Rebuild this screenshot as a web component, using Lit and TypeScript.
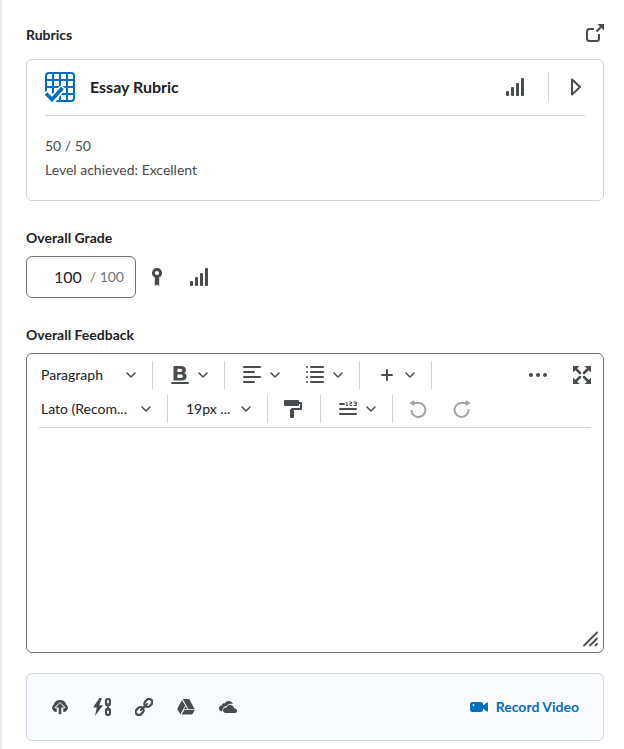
import { LitElement, html, css, svg, nothing } from "lit";
import { customElement, property } from "lit/decorators.js";

const glyphs: Record<string, unknown> = {
  open: svg`
    <path d="M8 5H3.500Q1 5 1 7.500V14.500Q1 17 3.500 17H10.500Q13 17 13 14.500V10" fill="none" stroke="currentColor" stroke-width="2"/>
    <path d="M10.500 7.500 15 3" fill="none" stroke="currentColor" stroke-width="2.200"/>
    <path d="M11.500 0H18V6.500Z"/>`,
  bars: svg`
    <rect x="0" y="13" width="3" height="5" rx="1"/>
    <rect x="5" y="9" width="3" height="9" rx="1"/>
    <rect x="10" y="5" width="3" height="13" rx="1"/>
    <rect x="15" y="0" width="3" height="18" rx="1"/>`,
  play: svg`<path d="M5 1.400V16.600L13 9Z" fill="none" stroke="currentColor" stroke-width="2" stroke-linejoin="round"/>`,
  award: svg`
    <circle cx="9" cy="5" r="3.600" fill="none" stroke="currentColor" stroke-width="3"/>
    <path d="M6.800 9H11.200V18L9 16.600 6.800 18Z"/>`,
  bold: svg`
    <path fill-rule="evenodd" d="M2.500 0H9.500C13.300 0 15 1.400 15 4C15 5.500 14.300 6.500 13 7.100C14.700 7.600 15.600 8.900 15.600 10.500C15.600 13.400 13.400 14.600 10 14.600H2.500ZM6.400 2.700V6H9C10.700 6 11.300 5.400 11.300 4.300C11.300 3.200 10.700 2.700 9 2.700ZM6.400 8.500V11.900H9.400C11.200 11.900 11.800 11.400 11.800 10.200C11.800 9 11.200 8.500 9.400 8.500Z"/>
    <rect x="0" y="16" width="18" height="2" rx="1"/>`,
  align: svg`
    <rect x="0" y="0" width="18" height="2" rx="1"/><rect x="0" y="5" width="12" height="2" rx="1"/>
    <rect x="0" y="10" width="18" height="2" rx="1"/><rect x="0" y="15" width="12" height="2" rx="1"/>`,
  list: svg`
    <rect x="0" y="0" width="2" height="2" rx="1"/><rect x="4" y="0" width="14" height="2" rx="1"/>
    <rect x="0" y="5" width="2" height="2" rx="1"/><rect x="4" y="5" width="14" height="2" rx="1"/>
    <rect x="0" y="10" width="2" height="2" rx="1"/><rect x="4" y="10" width="14" height="2" rx="1"/>
    <rect x="0" y="15" width="2" height="2" rx="1"/><rect x="4" y="15" width="14" height="2" rx="1"/>`,
  plus: svg`<path d="M9 4V14M4 9H14" fill="none" stroke="currentColor" stroke-width="2" stroke-linecap="round"/>`,
  dots: svg`<circle cx="2" cy="9" r="2"/><circle cx="9" cy="9" r="2"/><circle cx="16" cy="9" r="2"/>`,
  expand: svg`
    <path d="M3 3 7 7M15 3 11 7M3 15 7 11M15 15 11 11" fill="none" stroke="currentColor" stroke-width="2.500" stroke-linecap="round"/>
    <path d="M0 0H6.500L0 6.500ZM18 0V6.500L11.500 0ZM0 18V11.500L6.500 18ZM18 18H11.500L18 11.500Z"/>`,
  roller: svg`
    <rect x="0" y="0" width="15" height="6" rx="1"/>
    <path d="M15 3H17V9H8V11" fill="none" stroke="currentColor" stroke-width="2" stroke-linejoin="round"/>
    <rect x="6" y="9" width="4" height="9" rx="1"/>`,
  count: svg`
    <rect x="0" y="3" width="6" height="2" rx="1"/>
    <rect x="0" y="8" width="18" height="2" rx="1"/><rect x="0" y="13" width="18" height="2" rx="1"/>
    <path d="M7 2.500H8V5.500M7 5.500H9M10.500 2H12.500V3.500H11V5.500H13M14.500 2H17.300V5.500H14.500M15.500 3.700H17" fill="none" stroke="currentColor" stroke-width="1"/>`,
  undo: svg`
    <path d="M3.500 3H10A7 7 0 1 1 2.500 11" fill="none" stroke="currentColor" stroke-width="2" stroke-linecap="round"/>
    <path d="M0 3 5.500 0V6Z"/>`,
  redo: svg`
    <path d="M14.500 3H8A7 7 0 1 0 15.500 10" fill="none" stroke="currentColor" stroke-width="2" stroke-linecap="round"/>
    <path d="M18 3 12.500 0V6Z"/>`,
  upload: svg`
    <path d="M4.500 14A4.300 4.300 0 0 1 3 6.200A6.200 5.500 0 0 1 15 6.200A4.300 4.300 0 0 1 13.500 14Z"/>
    <path d="M9 5 13.500 9.500H11.500V15H6.500V9.500H4.500Z" fill="#f9fbff" stroke="#f9fbff" stroke-width="1.500" stroke-linejoin="round"/>
    <path d="M9 5.200 12.600 9.200H10V16H8V9.200H5.400Z" stroke="currentColor" stroke-width="0.600" stroke-linejoin="round"/>`,
  quick: svg`
    <path d="M6.500 0 0 9.500H3.800L2 18 10 7.200H6.200L9 0Z"/>
    <rect x="13" y="1" width="4" height="6.500" rx="2" fill="none" stroke="currentColor" stroke-width="2.200"/>
    <rect x="13" y="10.500" width="4" height="6.500" rx="2" fill="none" stroke="currentColor" stroke-width="2.200"/>
    <path d="M15 5V13" stroke="currentColor" stroke-width="1.500"/>`,
  link: svg`
    <g fill="none" stroke="currentColor" stroke-width="2.200">
      <rect x="9" y="1.700" width="8.600" height="6.400" rx="3.200" transform="rotate(-45 13.300 4.900)"/>
      <rect x="0.400" y="9.900" width="8.600" height="6.400" rx="3.200" transform="rotate(-45 4.700 13.100)"/>
      <path d="M6 12 12 6" stroke-linecap="round"/>
    </g>`,
  drive: svg`
    <path d="M5.800 1H12.200L17.800 11.200H11.400ZM5 2 8.300 7.600 3.400 16.300 0.200 11ZM7.300 12H17.800L15.200 16.500H4.600Z"/>
    <path d="M8.700 8.300 10.500 11.200H7Z"/>`,
  cloud: svg`
    <path d="M2.500 13.500C0.500 13 0 11.600 0 10.500C0 8.800 1.200 7.800 2.600 7.600C3 5.500 4.800 5 6 5.200C7 3.300 9 2.600 11 3.200C12.700 3.700 13.700 5 14 6.300C10.800 5 8.600 6.400 7.800 8C5.500 8 3.500 10 3.500 12Z"/>
    <path d="M7 15C5 15 4 13.900 4 12.300C4 10.500 5.500 9.300 7.500 9.500C8.500 7.200 10.200 6.500 12 6.900C13.600 7.200 14.800 8.600 15 10.200C17 10.200 18 11.300 18 12.700C18 14.100 17 15 15.600 15Z"/>`,
  video: svg`
    <path fill-rule="evenodd" d="M2.500 4H10.500Q13 4 13 6.500V7.500L17 4.500Q18 4 18 5V13Q18 14 17 13.500L13 10.500V11.500Q13 14 10.500 14H2.500Q0 14 0 11.500V6.500Q0 4 2.500 4ZM3.500 6A1 1 0 1 0 3.500 8A1 1 0 1 0 3.500 6Z"/>`,
  grip: svg`<path d="M3 15.500 16 2.500M9 15.500 16 8.500M14.500 15.500 16 14" fill="none" stroke="currentColor" stroke-width="1.800" stroke-linecap="round"/>`,
};

const icon = (name: string) =>
  html`<svg class="icon" viewBox="0 0 18 18" width="18" height="18" fill="currentColor" aria-hidden="true">${glyphs[name]}</svg>`;

const chevron = html`<svg class="chevron" viewBox="0 0 10 6" width="10" height="6" aria-hidden="true">
  <path d="M1 1 5 5 9 1" fill="none" stroke="currentColor" stroke-width="1.500" stroke-linecap="round" stroke-linejoin="round"/>
</svg>`;

const rubricIcon = html`<svg class="rubric-icon" viewBox="0 0 30 30" width="30" height="30" aria-hidden="true">
  <rect x="1" y="1" width="28" height="28" rx="3" fill="none" stroke="currentColor" stroke-width="2"/>
  <path d="M8 1V29M15 1V29M22 1V29M1 8H29M1 15H29M1 22H29" stroke="currentColor" stroke-width="2"/>
  <path d="M-1 20V31H10L20 16 16 13 8 22 3 19Z" fill="#fff"/>
  <path d="M1 22.500 7 28 17 16.500" fill="none" stroke="#fff" stroke-width="7"/>
  <path d="M1 21.500 7 27.500 17.500 16" fill="none" stroke="currentColor" stroke-width="3.600"/>
</svg>`;

const shared = css`
  * { box-sizing: border-box; }
  .icon, .chevron { display: block; flex: none; }
  button {
    display: flex;
    align-items: center;
    gap: 9px;
    margin: 0;
    padding: 0;
    border: 0;
    background: none;
    color: #494c4e;
    font: inherit;
    cursor: pointer;
  }
  button:disabled { color: #a4a5a6; cursor: default; }
`;

@customElement("rubric-card")
class RubricCard extends LitElement {
  @property() name = "";
  @property() score = "";
  @property() level = "";

  static styles = [shared, css`
    :host {
      display: block;
      padding: 0 18px;
      border: 1px solid #cdd5dc;
      border-radius: 6px;
    }
    .head {
      display: flex;
      align-items: center;
      height: 56px;
      padding-bottom: 1px;
      border-bottom: 1px solid #cdd5dc;
    }
    .rubric-icon { flex: none; color: #006fbf; }
    .name {
      flex: 1;
      margin: 0 0 0 15px;
      font-size: 16px;
      line-height: 24px;
      font-weight: 700;
      color: #202122;
    }
    .divider {
      width: 1px;
      height: 30px;
      margin: 0 18px 0 24px;
      background: #cdd5dc;
    }
    .body { padding: 18px 0; color: #494c4e; }
    .body p { margin: 0; line-height: 24px; }
  `];

  render() {
    return html`
      <div class="head">
        ${rubricIcon}
        <h3 class="name">${this.name}</h3>
        <button aria-label="Statistics">${icon("bars")}</button>
        <span class="divider"></span>
        <button aria-label="Open rubric">${icon("play")}</button>
      </div>
      <div class="body">
        <p>${this.score}</p>
        <p>Level achieved: ${this.level}</p>
      </div>`;
  }
}

@customElement("feedback-editor")
class FeedbackEditor extends LitElement {
  static styles = [shared, css`
    :host {
      display: flex;
      flex-direction: column;
      position: relative;
      min-height: 300px;
      border: 1px solid #6e7477;
      border-radius: 6px;
      overflow: hidden;
    }
    .toolbar {
      display: flex;
      flex-direction: column;
      gap: 6px;
      margin: 0 12px;
      padding: 7px 0 4px;
      border-bottom: 1px solid #cdd5dc;
    }
    .row { display: flex; height: 28px; }
    .group {
      display: flex;
      align-items: center;
      gap: 26px;
      padding: 0 16px 0 18px;
      border-right: 1px solid #cdd5dc;
    }
    .group.first { padding-left: 2px; }
    .group.single { padding: 0 18px 0 16px; }
    .group.history { padding-left: 16px; border-right: 0; }
    .group.end { margin-left: auto; padding-right: 0; border-right: 0; }
    .pick { display: grid; align-items: center; }
    .pick > * { grid-area: 1 / 1; }
    .pick .chevron { justify-self: end; color: #494c4e; pointer-events: none; }
    select {
      appearance: none;
      margin: 0;
      padding: 0;
      border: 0;
      background: none;
      color: #202122;
      font: inherit;
      height: 28px;
    }
    .style { width: 95px; }
    .font { width: 110px; }
    .size { width: 65px; }
    textarea {
      flex: 1;
      width: 100%;
      padding: 12px;
      border: 0;
      outline: 0;
      resize: none;
      background: none;
      color: #202122;
      font: inherit;
    }
    .grip { position: absolute; right: 4px; bottom: 4px; color: #494c4e; }
  `];

  private pick(kind: string, label: string, value: string) {
    return html`<span class="pick">
      <select class=${kind} aria-label=${label}><option>${value}</option></select>
      ${chevron}
    </span>`;
  }

  private tool(name: string, label: string, menu = false, disabled = false) {
    return html`<button aria-label=${label} ?disabled=${disabled}>${icon(name)}${menu ? chevron : nothing}</button>`;
  }

  render() {
    return html`
      <div class="toolbar" role="toolbar" aria-label="Formatting">
        <div class="row">
          <div class="group first">${this.pick("style", "Format", "Paragraph")}</div>
          <div class="group">${this.tool("bold", "Bold", true)}</div>
          <div class="group">
            ${this.tool("align", "Alignment", true)}
            ${this.tool("list", "List", true)}
          </div>
          <div class="group">${this.tool("plus", "Insert", true)}</div>
          <div class="group end">
            ${this.tool("dots", "More actions")}
            ${this.tool("expand", "Fullscreen")}
          </div>
        </div>
        <div class="row">
          <div class="group first">${this.pick("font", "Font family", "Lato (Recom...")}</div>
          <div class="group">${this.pick("size", "Font size", "19px ...")}</div>
          <div class="group single">${this.tool("roller", "Format painter")}</div>
          <div class="group">${this.tool("count", "Word count", true)}</div>
          <div class="group history">
            ${this.tool("undo", "Undo", false, true)}
            ${this.tool("redo", "Redo", false, true)}
          </div>
        </div>
      </div>
      <textarea aria-label="Overall Feedback"></textarea>
      <span class="grip">${icon("grip")}</span>`;
  }
}

@customElement("app-root")
class AppRoot extends LitElement {
  static styles = [shared, css`
    :host {
      display: block;
      min-height: 100vh;
      box-sizing: border-box;
      padding: 24px 20px 8px 24px;
      border-left: 2px solid #e3e9f1;
      background: #fff;
      color: #202122;
      font: 400 14px/22px Lato, "Open Sans", sans-serif;
    }
    .title-row {
      display: flex;
      justify-content: space-between;
      align-items: flex-start;
      margin-bottom: 13px;
    }
    .title {
      display: block;
      margin: 0;
      font-size: 14px;
      line-height: 22px;
      font-weight: 700;
    }
    .field { margin-top: 26px; }
    .field .title { margin-bottom: 7px; }
    .grade-row { display: flex; align-items: center; }
    .grade-box {
      display: flex;
      align-items: center;
      gap: 8px;
      width: 110px;
      height: 42px;
      margin-right: 12px;
      padding: 0 11px;
      border: 1px solid #6e7477;
      border-radius: 6px;
      box-shadow: inset 0 2px 0 #f0f1f2;
    }
    .grade-box input {
      flex: 1;
      min-width: 0;
      padding: 0;
      border: 0;
      outline: 0;
      background: none;
      color: #202122;
      font: inherit;
      font-size: 16px;
      text-align: right;
    }
    .out-of { color: #6e7477; }
    .grade-row button { margin-right: 24px; }
    .attach {
      display: flex;
      align-items: center;
      gap: 24px;
      height: 68px;
      margin-top: 20px;
      padding: 0 24px;
      border: 1px solid #cdd5dc;
      border-radius: 6px;
      background: #f9fbff;
    }
    .attach .record {
      gap: 8px;
      margin-left: auto;
      color: #006fbf;
      font-weight: 700;
    }
  `];

  render() {
    return html`
      <div class="title-row">
        <h2 class="title">Rubrics</h2>
        <button aria-label="Open in new window">${icon("open")}</button>
      </div>
      <rubric-card name="Essay Rubric" score="50 / 50" level="Excellent"></rubric-card>

      <div class="field">
        <label class="title" for="grade">Overall Grade</label>
        <div class="grade-row">
          <div class="grade-box">
            <input id="grade" type="text" inputmode="decimal" .value=${"100"}>
            <span class="out-of">/ 100</span>
          </div>
          <button aria-label="Awards">${icon("award")}</button>
          <button aria-label="Class statistics">${icon("bars")}</button>
        </div>
      </div>

      <div class="field">
        <h2 class="title">Overall Feedback</h2>
        <feedback-editor></feedback-editor>
      </div>

      <div class="attach">
        <button aria-label="Upload file">${icon("upload")}</button>
        <button aria-label="Attach quicklink">${icon("quick")}</button>
        <button aria-label="Attach web link">${icon("link")}</button>
        <button aria-label="Attach from Google Drive">${icon("drive")}</button>
        <button aria-label="Attach from OneDrive">${icon("cloud")}</button>
        <button class="record">${icon("video")}Record Video</button>
      </div>`;
  }
}
